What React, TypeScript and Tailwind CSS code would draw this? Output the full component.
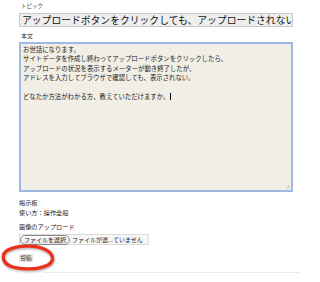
import React from 'react';

const jp = { fontFamily: '"Noto Sans CJK JP", "Noto Sans", sans-serif' };

export default function App() {
  return (
    <div className="relative w-[300px] h-[282px] overflow-hidden bg-white text-[#222]" style={jp}>
      <div className="pl-[19px] pr-[7px]">
        {/* Topic */}
        <div className="pt-[3px] pl-[2px] text-[5.5px] leading-[7px] text-[#444]">トピック</div>
        <div className="mt-[3px] h-[14px] border border-[#c8c8c8] bg-[#efefef] pl-[2px] text-[9.8px] leading-[12px] whitespace-nowrap overflow-hidden text-[#111]">
          アップロードボタンをクリックしても、アップロードされない
        </div>

        {/* Body */}
        <div className="mt-[5px] pl-[2px] text-[6px] leading-[7px] text-[#333]">本文</div>
        <div className="relative mt-[3px] h-[150px] border-2 border-[#9cbbe4] bg-[#f1eee6] px-[2px] pt-[0.5px] text-[6.4px] leading-[9.5px] text-[#1a1a1a]">
          <div>お世話になります。</div>
          <div>サイトデータを作成し終わってアップロードボタンをクリックしたら、</div>
          <div>アップロードの状況を表示するメーターが動き終了したが、</div>
          <div>アドレスを入力してブラウザで確認しても、表示されない。</div>
          <div>&nbsp;</div>
          <div className="flex items-center">
            どなたか方法がわかる方、教えていただけますか。
            <span className="ml-[1px] inline-block w-px h-[7px] bg-black" />
          </div>
          {/* resize grip */}
          <svg className="absolute right-[1px] bottom-[1px]" width="5" height="5" viewBox="0 0 5 5">
            <path d="M4.5 1 L1 4.5 M4.5 3 L3 4.5" stroke="#999" strokeWidth="0.6" />
          </svg>
        </div>

        {/* Board info */}
        <div className="mt-[6px] text-[6.2px] leading-[10px] text-[#222]">
          <div>掲示板</div>
          <div>使い方：操作全般</div>
        </div>

        {/* Upload */}
        <div className="mt-[4px] text-[6.2px] leading-[10px] text-[#222]">画像のアップロード</div>
        <div className="mt-[2px] flex items-center w-[130px] h-[11px] border border-[#dadada] bg-[#f7f7f7]">
          <span className="flex items-center h-[10px] px-[3px] rounded-full border border-[#8a8a8a] bg-gradient-to-b from-white to-[#e4e4e4] text-[6px] leading-[8px] text-[#222]">
            ファイルを選択
          </span>
          <span className="ml-[2px] text-[6px] leading-[8px] text-[#222] whitespace-nowrap">ファイルが選...ていません</span>
        </div>

        {/* Submit */}
        <div className="mt-[9px] flex items-center justify-center w-[14px] h-[8px] bg-[#e2e2e2] text-[5.5px] leading-[7px] text-[#333]">
          投稿
        </div>

        <div className="mt-[10px] ml-[24px] -mr-[7px] h-px bg-[#ecebe4]" />
      </div>

      {/* Red annotation circle */}
      <svg className="absolute left-0 top-[240px]" width="60" height="36" viewBox="0 0 60 36">
        <defs>
          <filter id="sh" x="-20%" y="-30%" width="140%" height="170%">
            <feDropShadow dx="0.5" dy="1.2" stdDeviation="0.8" floodColor="#000" floodOpacity="0.35" />
          </filter>
        </defs>
        <path
          d="M44 9 C36 5 18 5 8 10 C1 14 2 22 10 26 C20 30 38 30 48 25 C55 21 54 13 44 9"
          fill="none"
          stroke="#e8321f"
          strokeWidth="3.4"
          strokeLinecap="round"
          filter="url(#sh)"
        />
      </svg>
    </div>
  );
}
